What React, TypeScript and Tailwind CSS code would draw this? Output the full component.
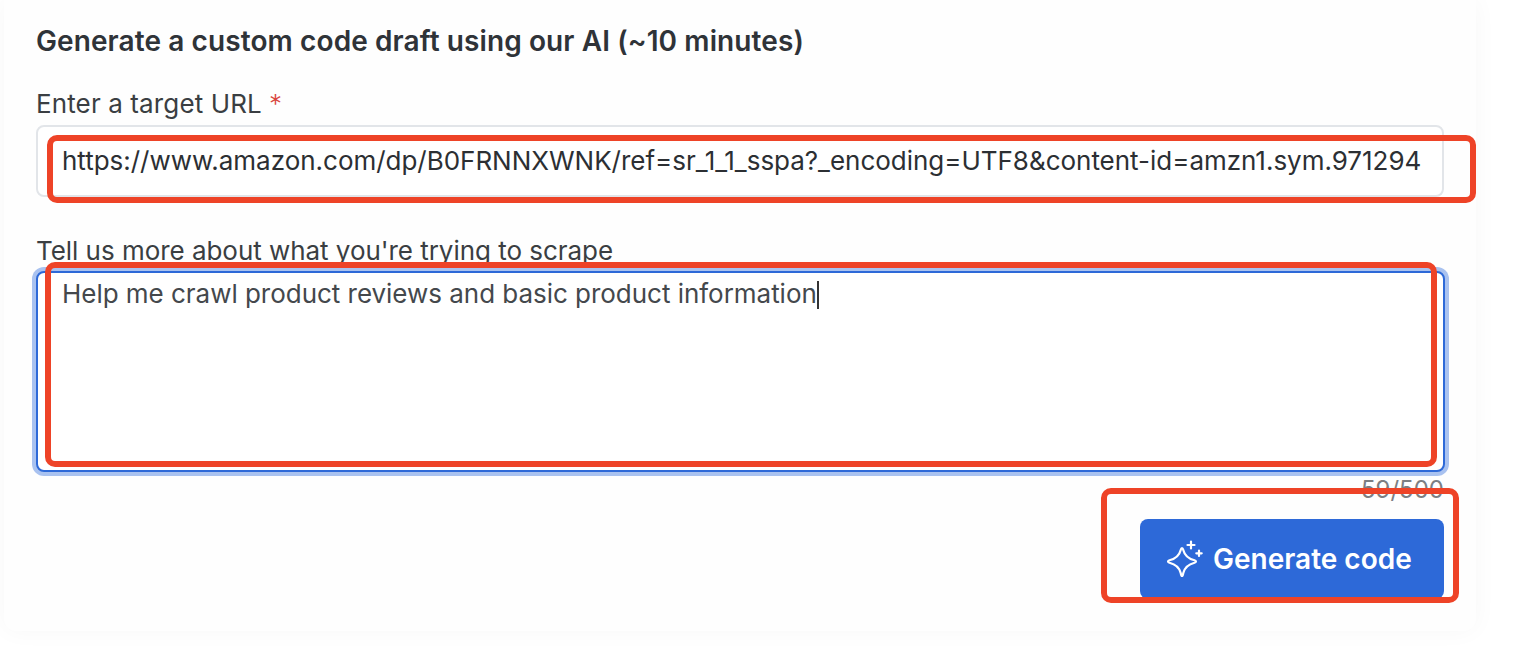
export default function App() {
  return (
    <div className="relative h-[658px] w-[1518px] overflow-hidden bg-white font-['Inter',sans-serif]">
      <div className="ml-1 flex h-[631px] w-[1472px] flex-col rounded-b-xl bg-[#fefefe] pl-8 pr-8 pt-[24px] shadow-[0_0_24px_rgba(0,0,0,0.035)]">
        <h2 className="h-[34px] whitespace-nowrap text-[28px] font-semibold leading-[34px] tracking-[0.1px] text-[#2f3338]">
          Generate a custom code draft using our AI (~10 minutes)
        </h2>
        <label className="mt-[29px] flex h-[34px] items-start text-[26px] leading-[34px] tracking-[0.12px] text-[#3a3e42]">
          Enter a target URL
          <span className="ml-[7px] text-[26px] font-light leading-[34px] text-[#d9443f]">*</span>
        </label>
        <div className="mt-[4px] flex h-[72px] w-[1408px] items-start rounded-lg border-2 border-[#e2e5e9] bg-white pl-[24px] pt-[17px]">
          <span className="whitespace-nowrap text-[26px] leading-[34px] tracking-[-0.02px] text-[#2c2f33]">
            https://www.amazon.com/dp/B0FRNNXWNK/ref=sr_1_1_sspa?_encoding=UTF8&amp;content-id=amzn1.sym.971294
          </span>
        </div>
        <label className="mt-[37px] h-[34px] text-[26px] leading-[34px] tracking-[-0.04px] text-[#3a3e42]">
          Tell us more about what you're trying to scrape
        </label>
        <div className="mt-[3px] flex h-[201px] w-[1409px] items-start rounded-lg border-2 border-[#2d69d8] bg-white pl-[24px] pt-[4px] shadow-[0_0_0_4px_#a9c2f0]">
          <span className="text-[26px] leading-[34px] tracking-[-0.03px] text-[#44484c]">
            Help me crawl product reviews and basic product information
          </span>
          <span className="mt-[4px] h-[28px] w-[2px] bg-[#333]" />
        </div>
        <div className="mt-[1px] h-[34px] w-[1408px] text-right text-[24px] leading-[34px] text-[#7c7f83]">59/500</div>
        <div className="mt-[12px] flex w-[1408px] justify-end">
          <button className="flex h-[80px] w-[304px] items-center justify-start gap-[10px] rounded-lg bg-[#2d69d8] pl-[27px] text-[28px] font-semibold text-white">
            <svg width="36" height="38" viewBox="0 0 36 38" fill="none" stroke="white" strokeWidth="2.2" strokeLinecap="round" strokeLinejoin="round">
              <path d="M15 8Q15.800 8 16.300 10C17.500 15 20.500 18.500 27.500 20.300Q29 20.800 29 21.500Q29 22.200 27.500 22.700C20.500 24.500 17.500 28 16.300 33Q15.800 36 15 36Q14.200 36 13.700 33C12.500 28 9.500 24.500 2.500 22.700Q1 22.200 1 21.500Q1 20.800 2.500 20.300C9.500 18.500 12.500 15 13.700 10Q14.200 8 15 8Z" />
              <path d="M24 1.500V8.500M20.500 5H27.500M32 10.500V16M29.300 13.300H34.700" />
            </svg>
            Generate code
          </button>
        </div>
      </div>
      <div className="absolute left-[47px] top-[135px] h-[68px] w-[1429px] rounded-[10px] border-[6px] border-[#ee4327]" />
      <div className="absolute left-[45px] top-[262px] h-[205px] w-[1392px] rounded-[10px] border-[6px] border-[#ee4327]" />
      <div className="absolute left-[1101px] top-[488px] h-[115px] w-[358px] rounded-[10px] border-[6px] border-[#ee4327]" />
    </div>
  );
}
